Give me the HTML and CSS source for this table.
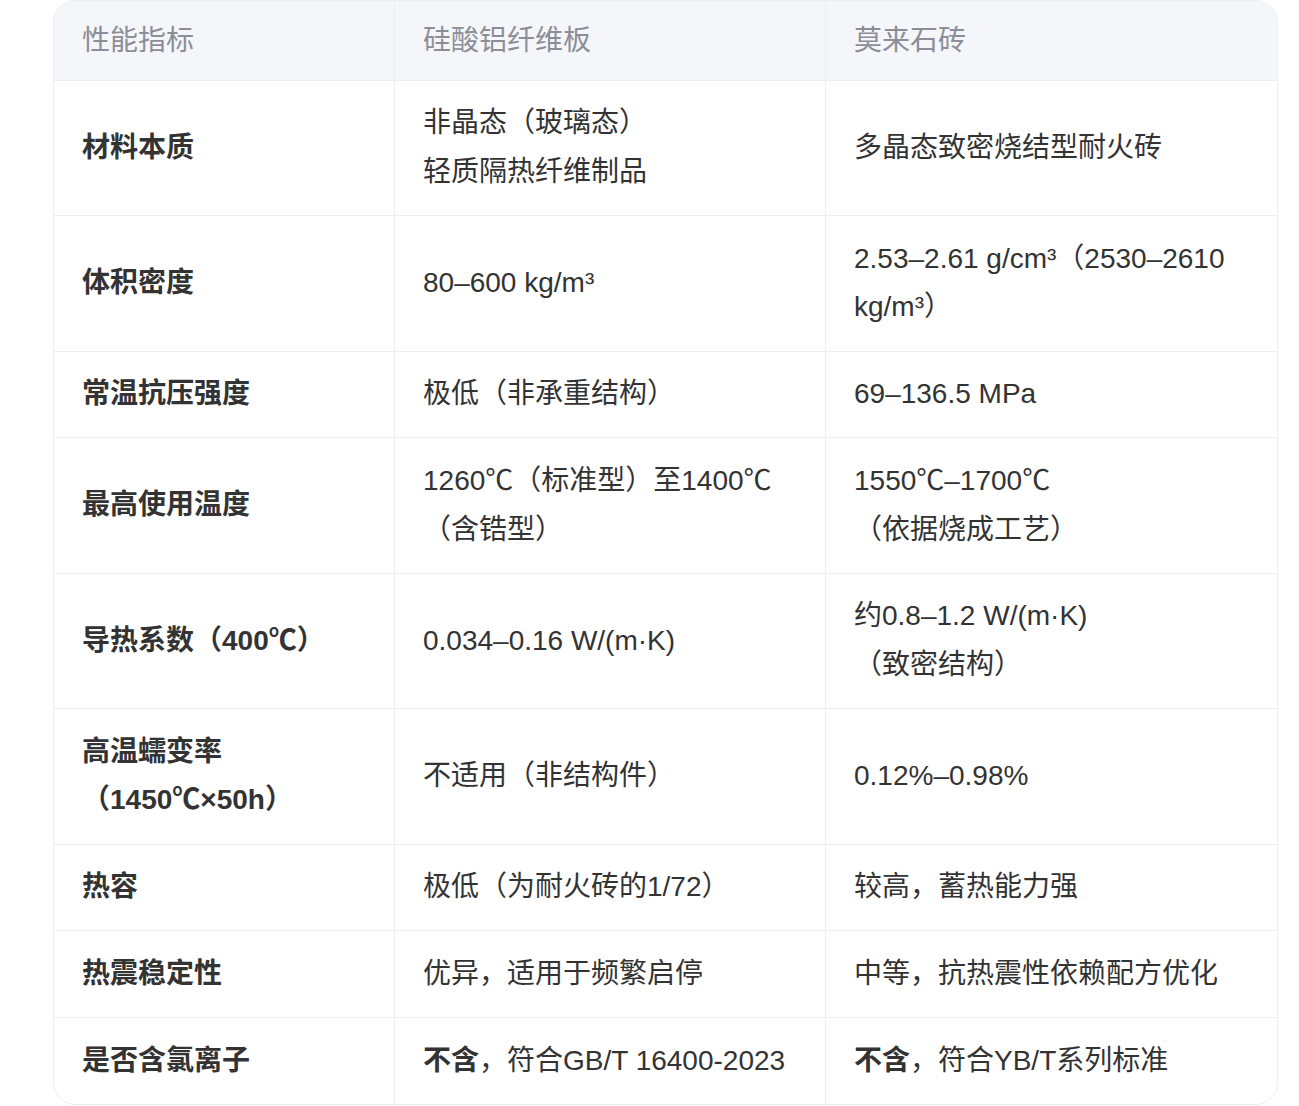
FILE: index.html
```html
<!DOCTYPE html>
<html lang="zh-CN">
<head>
<meta charset="utf-8">
<title>性能对比</title>
<link rel="stylesheet" href="styles.css">
</head>
<body>
<div class="page">
  <table class="cmp">
    <colgroup>
      <col class="c1">
      <col class="c2">
      <col class="c3">
    </colgroup>
    <thead>
      <tr>
        <th>性能指标</th>
        <th>硅酸铝纤维板</th>
        <th>莫来石砖</th>
      </tr>
    </thead>
    <tbody>
      <tr>
        <td class="k">材料本质</td>
        <td>非晶态（玻璃态）<br>轻质隔热纤维制品</td>
        <td>多晶态致密烧结型耐火砖</td>
      </tr>
      <tr>
        <td class="k">体积密度</td>
        <td>80–600 kg/m³</td>
        <td>2.53–2.61 g/cm³（2530–2610 kg/m³）</td>
      </tr>
      <tr>
        <td class="k">常温抗压强度</td>
        <td>极低（非承重结构）</td>
        <td>69–136.5 MPa</td>
      </tr>
      <tr>
        <td class="k">最高使用温度</td>
        <td>1260℃（标准型）至1400℃（含锆型）</td>
        <td>1550℃–1700℃<br>（依据烧成工艺）</td>
      </tr>
      <tr>
        <td class="k">导热系数（400℃）</td>
        <td>0.034–0.16 W/(m·K)</td>
        <td>约0.8–1.2 W/(m·K)<br>（致密结构）</td>
      </tr>
      <tr>
        <td class="k">高温蠕变率<br>（1450℃×50h）</td>
        <td>不适用（非结构件）</td>
        <td>0.12%–0.98%</td>
      </tr>
      <tr>
        <td class="k">热容</td>
        <td>极低（为耐火砖的1/72）</td>
        <td>较高，蓄热能力强</td>
      </tr>
      <tr>
        <td class="k">热震稳定性</td>
        <td>优异，适用于频繁启停</td>
        <td>中等，抗热震性依赖配方优化</td>
      </tr>
      <tr>
        <td class="k">是否含氯离子</td>
        <td><strong>不含</strong>，符合GB/T 16400-2023</td>
        <td><strong>不含</strong>，符合YB/T系列标准</td>
      </tr>
    </tbody>
  </table>
</div>
</body>
</html>
```

FILE: styles.css
```css
html, body {
  margin: 0;
  padding: 0;
  background: #ffffff;
}

.page {
  padding: 0 22px 0 53px;
}

.cmp {
  width: 1223px;
  table-layout: fixed;
  border-collapse: separate;
  border-spacing: 0;
  border: 1px solid #eceef1;
  border-radius: 22px;
  overflow: hidden;
  font-family: "Liberation Sans", "Noto Sans CJK SC", sans-serif;
  font-size: 28px;
  line-height: 1.74;
  color: #333333;
}

.c1 { width: 340px; }
.c2 { width: 431px; }
.c3 { width: 452px; }

.cmp th {
  background: #f5f6fa;
  color: #8b8e98;
  font-weight: 400;
  text-align: left;
  padding: 16px 28px 14px 28px;
  border-bottom: 1px solid #eceef1;
}

.cmp td {
  padding: 18.5px 28px;
  vertical-align: middle;
  border-bottom: 1px solid #eceef1;
}

.cmp th + th,
.cmp td + td {
  border-left: 1px solid #eceef1;
}

.cmp tbody tr:last-child td {
  border-bottom: none;
}

.cmp td.k {
  font-weight: 700;
}

.cmp strong {
  font-weight: 700;
}
```
